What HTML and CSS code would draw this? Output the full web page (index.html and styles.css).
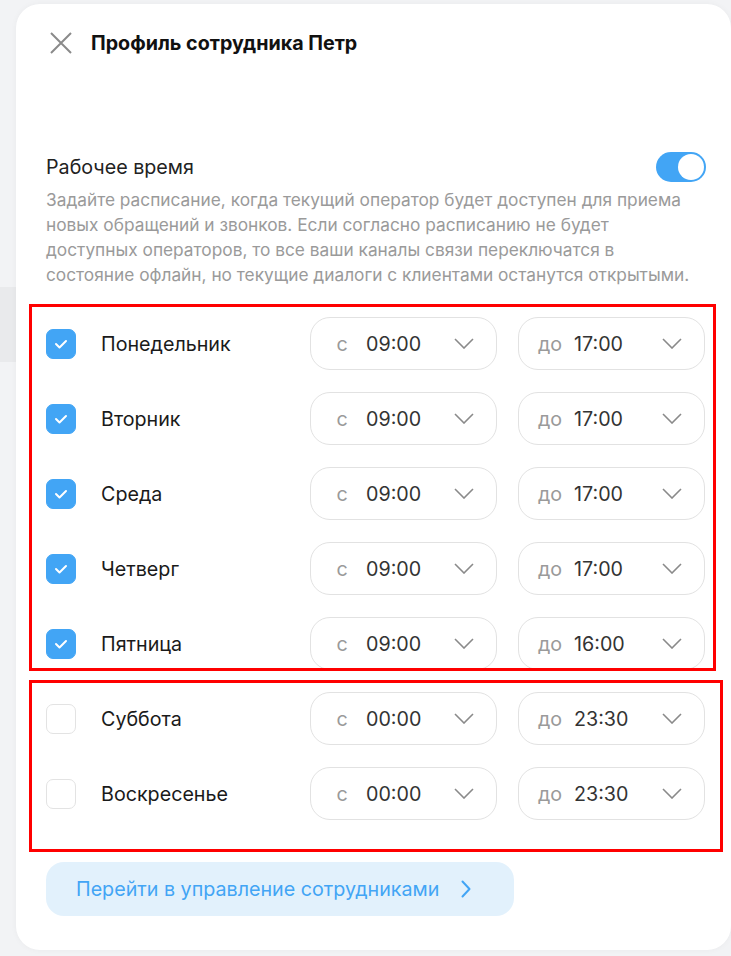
FILE: index.html
```html
<!DOCTYPE html>
<html lang="ru">
<head>
    <meta charset="UTF-8">
    <meta name="viewport" content="width=device-width, initial-scale=1.0">
    <title>Профиль сотрудника</title>
    <link rel="stylesheet" href="styles.css">
</head>
<body>
    <div class="panel">
        <div class="panel-header">
            <button class="close-btn" aria-label="Закрыть">
                <svg width="22" height="22" viewBox="0 0 22 22"><path d="M1 1L21 21M21 1L1 21" stroke="#8a8a8a" stroke-width="2" fill="none"/></svg>
            </button>
            <h1>Профиль сотрудника Петр</h1>
        </div>

        <div class="section-head">
            <span class="section-title">Рабочее время</span>
            <span class="toggle on"><span class="knob"></span></span>
        </div>
        <p class="hint">Задайте расписание, когда текущий оператор будет доступен для приема новых обращений и звонков. Если согласно расписанию не будет доступных операторов, то все ваши каналы связи переключатся в состояние офлайн, но текущие диалоги с клиентами останутся открытыми.</p>

        <div class="schedule">
            <div class="day-group weekdays">
                <div class="day-row">
                    <span class="check checked"><svg width="14" height="10" viewBox="0 0 14 10"><path d="M2 5l3.5 3.5L12 2" stroke="#fff" stroke-width="2" fill="none" stroke-linecap="round" stroke-linejoin="round"/></svg></span>
                    <span class="day-name">Понедельник</span>
                    <div class="time-select"><span class="prefix">с</span><span class="time">09:00</span><svg class="chev" width="20" height="11" viewBox="0 0 20 11"><path d="M1 1l9 9 9-9" stroke="#8a8a8a" stroke-width="1.6" fill="none"/></svg></div>
                    <div class="time-select"><span class="prefix">до</span><span class="time">17:00</span><svg class="chev" width="20" height="11" viewBox="0 0 20 11"><path d="M1 1l9 9 9-9" stroke="#8a8a8a" stroke-width="1.6" fill="none"/></svg></div>
                </div>
                <div class="day-row">
                    <span class="check checked"><svg width="14" height="10" viewBox="0 0 14 10"><path d="M2 5l3.5 3.5L12 2" stroke="#fff" stroke-width="2" fill="none" stroke-linecap="round" stroke-linejoin="round"/></svg></span>
                    <span class="day-name">Вторник</span>
                    <div class="time-select"><span class="prefix">с</span><span class="time">09:00</span><svg class="chev" width="20" height="11" viewBox="0 0 20 11"><path d="M1 1l9 9 9-9" stroke="#8a8a8a" stroke-width="1.6" fill="none"/></svg></div>
                    <div class="time-select"><span class="prefix">до</span><span class="time">17:00</span><svg class="chev" width="20" height="11" viewBox="0 0 20 11"><path d="M1 1l9 9 9-9" stroke="#8a8a8a" stroke-width="1.6" fill="none"/></svg></div>
                </div>
                <div class="day-row">
                    <span class="check checked"><svg width="14" height="10" viewBox="0 0 14 10"><path d="M2 5l3.5 3.5L12 2" stroke="#fff" stroke-width="2" fill="none" stroke-linecap="round" stroke-linejoin="round"/></svg></span>
                    <span class="day-name">Среда</span>
                    <div class="time-select"><span class="prefix">с</span><span class="time">09:00</span><svg class="chev" width="20" height="11" viewBox="0 0 20 11"><path d="M1 1l9 9 9-9" stroke="#8a8a8a" stroke-width="1.6" fill="none"/></svg></div>
                    <div class="time-select"><span class="prefix">до</span><span class="time">17:00</span><svg class="chev" width="20" height="11" viewBox="0 0 20 11"><path d="M1 1l9 9 9-9" stroke="#8a8a8a" stroke-width="1.6" fill="none"/></svg></div>
                </div>
                <div class="day-row">
                    <span class="check checked"><svg width="14" height="10" viewBox="0 0 14 10"><path d="M2 5l3.5 3.5L12 2" stroke="#fff" stroke-width="2" fill="none" stroke-linecap="round" stroke-linejoin="round"/></svg></span>
                    <span class="day-name">Четверг</span>
                    <div class="time-select"><span class="prefix">с</span><span class="time">09:00</span><svg class="chev" width="20" height="11" viewBox="0 0 20 11"><path d="M1 1l9 9 9-9" stroke="#8a8a8a" stroke-width="1.6" fill="none"/></svg></div>
                    <div class="time-select"><span class="prefix">до</span><span class="time">17:00</span><svg class="chev" width="20" height="11" viewBox="0 0 20 11"><path d="M1 1l9 9 9-9" stroke="#8a8a8a" stroke-width="1.6" fill="none"/></svg></div>
                </div>
                <div class="day-row">
                    <span class="check checked"><svg width="14" height="10" viewBox="0 0 14 10"><path d="M2 5l3.5 3.5L12 2" stroke="#fff" stroke-width="2" fill="none" stroke-linecap="round" stroke-linejoin="round"/></svg></span>
                    <span class="day-name">Пятница</span>
                    <div class="time-select"><span class="prefix">с</span><span class="time">09:00</span><svg class="chev" width="20" height="11" viewBox="0 0 20 11"><path d="M1 1l9 9 9-9" stroke="#8a8a8a" stroke-width="1.6" fill="none"/></svg></div>
                    <div class="time-select"><span class="prefix">до</span><span class="time">16:00</span><svg class="chev" width="20" height="11" viewBox="0 0 20 11"><path d="M1 1l9 9 9-9" stroke="#8a8a8a" stroke-width="1.6" fill="none"/></svg></div>
                </div>
            </div>

            <div class="day-group weekend">
                <div class="day-row">
                    <span class="check"></span>
                    <span class="day-name">Суббота</span>
                    <div class="time-select"><span class="prefix">с</span><span class="time">00:00</span><svg class="chev" width="20" height="11" viewBox="0 0 20 11"><path d="M1 1l9 9 9-9" stroke="#8a8a8a" stroke-width="1.6" fill="none"/></svg></div>
                    <div class="time-select"><span class="prefix">до</span><span class="time">23:30</span><svg class="chev" width="20" height="11" viewBox="0 0 20 11"><path d="M1 1l9 9 9-9" stroke="#8a8a8a" stroke-width="1.6" fill="none"/></svg></div>
                </div>
                <div class="day-row">
                    <span class="check"></span>
                    <span class="day-name">Воскресенье</span>
                    <div class="time-select"><span class="prefix">с</span><span class="time">00:00</span><svg class="chev" width="20" height="11" viewBox="0 0 20 11"><path d="M1 1l9 9 9-9" stroke="#8a8a8a" stroke-width="1.6" fill="none"/></svg></div>
                    <div class="time-select"><span class="prefix">до</span><span class="time">23:30</span><svg class="chev" width="20" height="11" viewBox="0 0 20 11"><path d="M1 1l9 9 9-9" stroke="#8a8a8a" stroke-width="1.6" fill="none"/></svg></div>
                </div>
            </div>
        </div>

        <a class="manage-link" href="#">
            Перейти в управление сотрудниками
            <svg width="10" height="18" viewBox="0 0 10 18"><path d="M1.5 1.5L8.5 9l-7 7.5" stroke="#42a5f5" stroke-width="2" fill="none" stroke-linecap="round" stroke-linejoin="round"/></svg>
        </a>
    </div>
</body>
</html>
```

FILE: styles.css
```css
html, body {
    margin: 0;
    height: 100%;
}
body {
    font-family: Inter, 'Noto Sans', sans-serif;
    color: #222;
    background:
        linear-gradient(to bottom, transparent 287px, #e9eaec 287px, #e9eaec 362px, transparent 362px),
        #f2f3f5;
    padding: 4px 0 6px 16px;
    box-sizing: border-box;
    overflow: hidden;
}
.panel {
    background: #fff;
    border-radius: 24px;
    height: 946px;
    box-sizing: border-box;
    padding: 26px 25px 0 30px;
    box-shadow: 0 0 6px rgba(0,0,0,0.04);
}
.panel-header {
    display: flex;
    align-items: center;
    gap: 19px;
    height: 26px;
}
.close-btn {
    background: none;
    border: none;
    padding: 0;
    margin-left: 4px;
    width: 22px;
    height: 22px;
    cursor: pointer;
}
.close-btn svg {
    display: block;
}
h1 {
    margin: 0;
    font-size: 19.7px;
    font-weight: 700;
    color: #111;
}
.section-head {
    display: flex;
    justify-content: space-between;
    align-items: center;
    margin-top: 96px;
    height: 30px;
}
.section-title {
    font-size: 19.7px;
    color: #222;
}
.toggle {
    width: 50px;
    height: 30px;
    border-radius: 15px;
    background: #ccc;
    display: flex;
    align-items: center;
    padding: 2px;
    box-sizing: border-box;
}
.toggle.on {
    background: #42a5f5;
    justify-content: flex-end;
}
.knob {
    width: 26px;
    height: 26px;
    border-radius: 50%;
    background: #fff;
}
.hint {
    margin: 5px 0 0;
    max-width: 656px;
    font-size: 17.3px;
    line-height: 25px;
    color: #9a9a9a;
}
.schedule {
    margin-top: 30px;
    display: flex;
    flex-direction: column;
    gap: 22px;
}
.day-group {
    position: relative;
    display: flex;
    flex-direction: column;
    gap: 22px;
}
.day-group::after {
    content: '';
    position: absolute;
    border: 3px solid #f00;
    pointer-events: none;
}
.weekdays::after {
    top: -13px;
    left: -17px;
    right: -10px;
    bottom: -1px;
}
.weekend::after {
    top: -12px;
    left: -17px;
    right: -17px;
    bottom: -32px;
}
.day-row {
    display: flex;
    align-items: center;
    height: 53px;
}
.check {
    width: 30px;
    height: 30px;
    border-radius: 7px;
    border: 1px solid #e3e3e3;
    box-sizing: border-box;
    display: flex;
    align-items: center;
    justify-content: center;
    flex-shrink: 0;
}
.check.checked {
    background: #42a5f5;
    border-color: #42a5f5;
}
.day-name {
    margin-left: 25px;
    font-size: 19.7px;
    color: #1a1a1a;
    width: 209px;
    flex-shrink: 0;
}
.time-select {
    width: 187px;
    height: 53px;
    flex-shrink: 0;
    box-sizing: border-box;
    border: 1px solid #e2e2e2;
    border-radius: 20px;
    display: flex;
    align-items: center;
    padding: 0 22px 0 14px;
    font-size: 19.7px;
}
.time-select + .time-select {
    margin-left: 21px;
}
.prefix {
    color: #9a9a9a;
    width: 34px;
    margin-right: 7px;
    text-align: center;
}
.time {
    color: #333;
}
.chev {
    margin-left: auto;
}
.manage-link {
    margin-top: 42px;
    display: inline-flex;
    align-items: center;
    gap: 22px;
    height: 54px;
    padding: 0 43px 0 30px;
    border-radius: 18px;
    background: #e2f1fc;
    color: #42a5f5;
    font-size: 19.7px;
    text-decoration: none;
}
```
